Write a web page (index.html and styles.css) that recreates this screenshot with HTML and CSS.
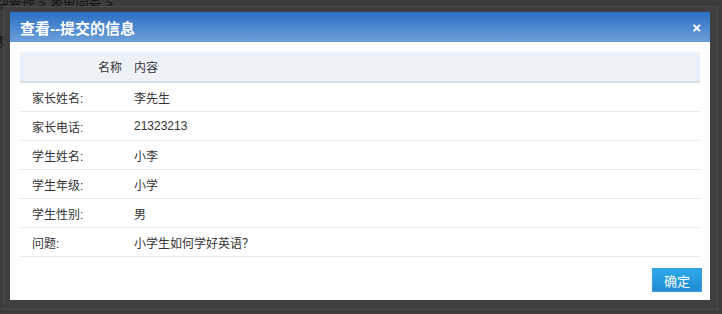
FILE: index.html
```html
<!DOCTYPE html>
<html lang="zh-CN">
<head>
    <meta charset="UTF-8">
    <title>查看--提交的信息</title>
    <link rel="stylesheet" href="styles.css">
</head>
<body>
    <div class="page">
        <div class="crumb">块管理 &gt; 表单问号 &gt;</div>
        <div class="crumb-sub">表单</div>
    </div>

    <div class="mask">
        <div class="frame">
            <div class="dialog">
                <div class="dialog-title">
                    <span>查看--提交的信息</span>
                    <span class="close">×</span>
                </div>
                <div class="dialog-body">
                    <table class="info">
                        <thead>
                            <tr><th class="col-name">名称</th><th>内容</th></tr>
                        </thead>
                        <tbody>
                            <tr><td class="col-name">家长姓名:</td><td>李先生</td></tr>
                            <tr><td class="col-name">家长电话:</td><td>21323213</td></tr>
                            <tr><td class="col-name">学生姓名:</td><td>小李</td></tr>
                            <tr><td class="col-name">学生年级:</td><td>小学</td></tr>
                            <tr><td class="col-name">学生性别:</td><td>男</td></tr>
                            <tr><td class="col-name">问题:</td><td class="cjk">小学生如何学好英语？</td></tr>
                        </tbody>
                    </table>
                    <div class="dialog-foot">
                        <button class="btn-ok">确定</button>
                    </div>
                </div>
            </div>
        </div>
    </div>
</body>
</html>
```

FILE: styles.css
```css
body {
    margin: 0;
    padding: 0;
    background-color: #3c3c3c;
    font-family: "Liberation Sans", "Noto Sans CJK SC", sans-serif;
    font-size: 12px;
    color: #333;
    height: 314px;
    overflow: hidden;
}

/* page behind the mask */
.page {
    color: #141414;
}

.crumb {
    margin-left: -4px;
    margin-top: -4px;
    font-size: 13px;
    line-height: 16px;
    white-space: nowrap;
}

.crumb-sub {
    margin-left: -6px;
    margin-top: 20px;
    font-size: 13px;
}

.mask {
    position: fixed;
    top: 0;
    left: 0;
    right: 0;
    bottom: 0;
}

.frame {
    position: absolute;
    left: 3px;
    top: 6px;
    width: 713px;
    height: 302px;
    border: 1px solid #4a4a4a;
    background-color: #3f3f3f;
}

.dialog {
    position: absolute;
    left: 6px;
    top: 5px;
    width: 700px;
    height: 288px;
    background-color: #fff;
    display: flex;
    flex-direction: column;
}

.dialog-title {
    height: 30px;
    background: linear-gradient(to bottom, #2b70c3, #6c9fd9);
    color: #fff;
    font-size: 15px;
    font-weight: bold;
    display: flex;
    align-items: center;
    justify-content: space-between;
    padding: 0 9px 0 10px;
}

.close {
    font-size: 15px;
    font-weight: bold;
    line-height: 1;
}

.dialog-body {
    flex: 1;
    padding: 10px 10px 8px;
    display: flex;
    flex-direction: column;
}

.info {
    width: 100%;
    border-collapse: collapse;
}

.info th {
    height: 29px;
    background-color: #edf2f7;
    border-bottom: 2px solid #d5dfea;
    font-weight: normal;
    text-align: left;
    padding: 0;
}

.info th.col-name {
    text-align: right;
    padding-right: 12px;
}

.info td {
    height: 28px;
    border-bottom: 1px solid #ebebeb;
    padding: 0;
}

.info .col-name {
    width: 102px;
}

.info td.col-name {
    padding-left: 12px;
    width: 90px;
}

.info td.cjk {
    font-family: "Noto Sans CJK SC", sans-serif;
}

.dialog-foot {
    margin-top: auto;
    display: flex;
    justify-content: flex-end;
}

.btn-ok {
    width: 50px;
    height: 24px;
    margin-right: -2px;
    background: linear-gradient(to bottom, #2daae8, #1f8bd4);
    border: 1px solid #3b9be0;
    color: #fff;
    font-family: "Liberation Sans", "Noto Sans CJK SC", sans-serif;
    font-size: 13px;
    padding: 0;
    cursor: pointer;
}
```
